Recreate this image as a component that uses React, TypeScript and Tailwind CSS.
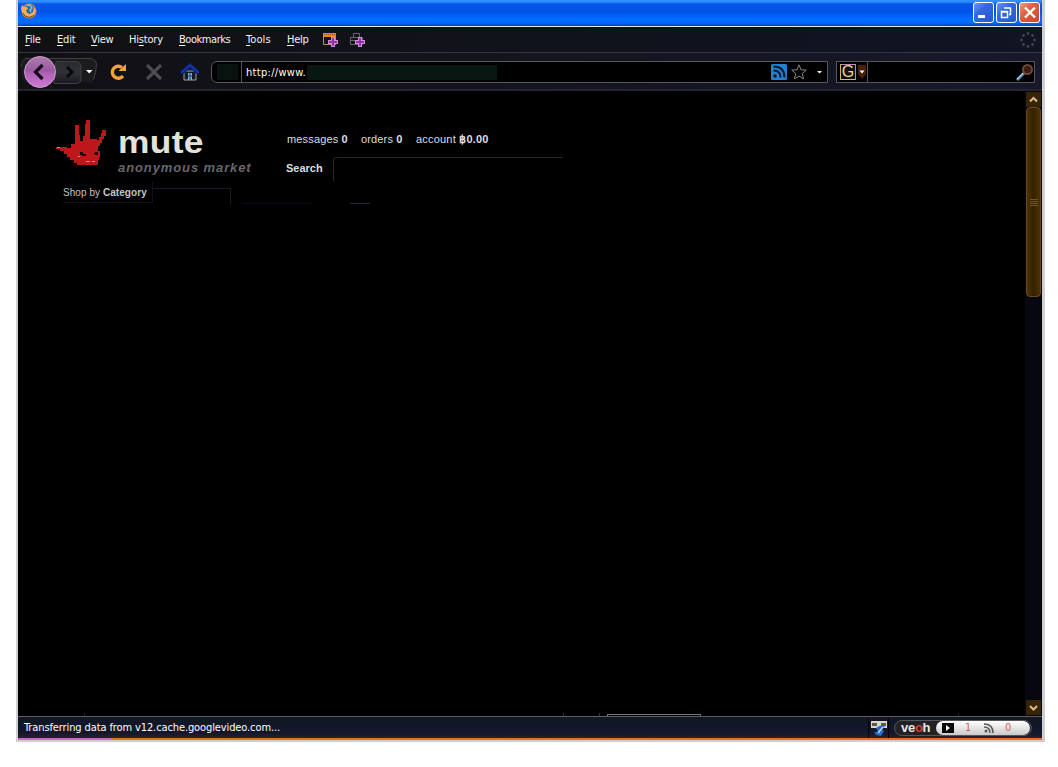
import React from "react";

const ui = "font-['DejaVu_Sans_Condensed','DejaVu_Sans',sans-serif] text-[11px] leading-[14px] whitespace-nowrap";

const menus = [
  { key: "F", pre: "", post: "ile", w: "w-8", ls: "tracking-[-0.2px]" },
  { key: "E", pre: "", post: "dit", w: "w-[34px]", ls: "tracking-[-0.2px]" },
  { key: "V", pre: "", post: "iew", w: "w-[38px]", ls: "tracking-[-0.3px]" },
  { key: "s", pre: "Hi", post: "tory", w: "w-[50px]", ls: "tracking-[-0.2px]" },
  { key: "B", pre: "", post: "ookmarks", w: "w-[67px]", ls: "tracking-[-0.45px]" },
  { key: "T", pre: "", post: "ools", w: "w-[41px]", ls: "tracking-[0.1px]" },
  { key: "H", pre: "", post: "elp", w: "w-[35px]", ls: "tracking-[-0.3px]" },
];

function Firefox() {
  return (
    <svg className="ml-[3px] h-4 w-4" viewBox="0 0 16 16">
      <circle cx="8" cy="8" r="7.5" fill="#d9863a" />
      <circle cx="8.500" cy="6.500" r="5" fill="#2a6c9c" />
      <path d="M6 2.500l3-.5 2 3-2 2 1 2" fill="none" stroke="#86c5d6" strokeWidth="1.5" />
      <path d="M1 2l2 2h3l1 2-2 1 1 3 3 1 3-2 1-5 2 4-3 5-5 1-5-3-2-5z" fill="#f5ae58" />
      <path d="M2 10l2 3 4 1.500 5-2" fill="none" stroke="#85461d" />
    </svg>
  );
}

function CaptionButtons() {
  return (
    <svg className="mr-[1px] h-[22px] w-[68px]" viewBox="0 0 68 22" fill="none">
      <defs>
        <linearGradient id="cb" x1="0" y1="0" x2="1" y2="1">
          <stop offset="0" stopColor="#6d9cf5" />
          <stop offset=".4" stopColor="#3467dc" />
          <stop offset="1" stopColor="#2458d0" />
        </linearGradient>
        <linearGradient id="cr" x1="0" y1="0" x2="1" y2="1">
          <stop offset="0" stopColor="#f0a07f" />
          <stop offset=".4" stopColor="#e06040" />
          <stop offset="1" stopColor="#cc4522" />
        </linearGradient>
      </defs>
      <rect x=".5" y=".5" width="20" height="20" rx="2.5" fill="url(#cb)" stroke="#fff" />
      <rect x="23.5" y=".5" width="20" height="20" rx="2.5" fill="url(#cb)" stroke="#fff" />
      <rect x="46.5" y=".5" width="20" height="20" rx="2.5" fill="url(#cr)" stroke="#fff" />
      <path d="M5 14.5h7" stroke="#fff" strokeWidth="3" />
      <path d="M31 6h7M37.5 6v7M36 12.5h2" stroke="#fff" strokeWidth="1.5" />
      <path d="M28.5 9.5h6v6h-6zM28 10h7" stroke="#fff" strokeWidth="1.5" />
      <path d="M52 5.500l10 10M62 5.500l-10 10" stroke="#fff" strokeWidth="2.400" />
    </svg>
  );
}

function Plus() {
  return (
    <>
      <path d="M9 5h4v3h3v4h-3v3H9v-3H6V8h3z" fill="#cf8ed8" />
      <path d="M10 6h2v3h3v2h-3v3h-2v-3H7V9h3z" fill="#9532a8" />
    </>
  );
}

function Throbber() {
  const dots = [[8, 1.5], [12.5, 3.5], [14.5, 8], [12.5, 12.5], [8, 14.5], [3.5, 12.5], [1.5, 8], [3.5, 3.5]];
  return (
    <svg className="mr-[6px] h-4 w-4" viewBox="0 0 16 16">
      {dots.map(([x, y], i) => <circle key={i} cx={x} cy={y} r="1.4" fill="#41444f" />)}
    </svg>
  );
}

function NavButtons() {
  return (
    <svg className="h-[34px] w-[79px] shrink-0" viewBox="0 0 79 34" fill="none">
      <defs>
        <linearGradient id="back" x1="0" y1="0" x2="0" y2="1">
          <stop offset="0" stopColor="#b07ab2" />
          <stop offset=".45" stopColor="#9a5a9e" />
          <stop offset=".55" stopColor="#b062b6" />
          <stop offset="1" stopColor="#cf78d4" />
        </linearGradient>
        <linearGradient id="fwd" x1="0" y1="0" x2="0" y2="1">
          <stop offset="0" stopColor="#2a2b2e" />
          <stop offset=".5" stopColor="#303134" />
          <stop offset="1" stopColor="#1a1a1e" />
        </linearGradient>
      </defs>
      <path d="M7 3.500h66q6 1 6 8-1 8-4 16H8q-5-3-5-10t4-14z" fill="#1b1b1e" />
      <path d="M3 12q1-8 5-8.500h65q5 1 5.500 6-.5 9-3 15" stroke="#404147" />
      <path d="M38 6.500h21q4 1 4 5v13q0 3-4 4H36z" fill="url(#fwd)" stroke="#3d3e42" />
      <path d="M49 12l5 5-5 5" stroke="#08080c" strokeWidth="3" />
      <circle cx="22" cy="17" r="15.500" fill="url(#back)" stroke="#c99acc" />
      <path d="M24.500 10l-7 7 7 7" stroke="#17091a" strokeWidth="3.200" />
      <path d="M68 15h6.500l-3.250 3.500z" fill="#fff" />
    </svg>
  );
}

function Reload() {
  return (
    <svg className="ml-[12px] h-[18px] w-[18px]" viewBox="0 0 18 18" fill="none">
      <path d="M14 13A6 6 0 1 1 13 4.500" stroke="#f0a336" strokeWidth="3.400" />
      <path d="M9.500 8H17V1z" fill="#f5a52d" />
    </svg>
  );
}

function House() {
  return (
    <svg className="ml-[18px] h-[18px] w-5" viewBox="0 0 20 18" fill="none">
      <path d="M4 8h12v9H4z" fill="#151a26" stroke="#a9a295" />
      <path d="M1.500 10L10 2.500l8.500 7.500" stroke="#0b2385" strokeWidth="4" />
      <path d="M1 10L10 2l9 8" stroke="#1e4bc4" />
      <path d="M8 10h4v7H8z" fill="#76b9d5" />
      <path d="M10 10v7M8 13h4" stroke="#163e66" />
    </svg>
  );
}

function SearchEngine() {
  return (
    <div className="flex h-full w-[31px] items-center border-r border-[#55565e] pl-[3px]">
      <div className="flex h-4 w-4 shrink-0 items-center justify-center border border-t-[#c58bb8] border-r-[#74a5d8] border-b-[#d9b76a] border-l-[#d7b45c] bg-[#100c10] font-['Liberation_Sans',sans-serif] text-[16px] leading-none text-[#f2d987]">G</div>
      <svg className="ml-[2px] h-4 w-2" viewBox="0 0 8 16"><path d="M0 1h8v9l-4 5-4-5z" fill="#4b200d" /><path d="M1.500 6.500h5L4 9.500z" fill="#fff" /></svg>
    </div>
  );
}

function HandLogo() {
  return (
    <svg className="h-[48px] w-[52px]" viewBox="0 0 52 48">
      <path d="M20 6h4v10h1v6h3v-5h2V5h1V1h4v19h7v1h2v-3h2v-4h1v-3h4v6h-2v3h-2v4h-2v3h-2v5h2v6h-1v3h-1v5H22v-2h-3v-3h-4v-3h-3v-3H9v-3H5v-2H1v-2h11v1h4v-4h4z" fill="#bd171b" />
      <path d="M25 33h3v2h3v2h-4v-1h-2zM40 33h3v3h-3v-1h-1v-1h1z" fill="#1f0305" />
      <path d="M23 37h2v1h-2zm8 5h4v1h-4zm6 0h3v1h-3zM2 28h3v1H2z" fill="#d98d8b" />
    </svg>
  );
}

export default function App() {
  return (
    <div className="h-[767px] w-[1058px] overflow-hidden bg-white">
      <div className="ml-4 flex h-[742px] w-[1029px] flex-col border-r-[3px] border-b-2 border-l-2 border-[#cfcfd1] bg-black">
        <header className="flex h-[26px] shrink-0 items-center justify-between bg-[linear-gradient(#398eff_0px,#258bff_2px,#0757e8_4px,#0053e7_12px,#006aff_18px,#0069ff_23px,#0040bd_26px)]">
          <div className="mb-1"><Firefox /></div>
          <CaptionButtons />
        </header>
        <nav className={`flex h-[27px] shrink-0 items-center border-t border-b border-t-[#e7e7e9] border-b-[#34353e] bg-gradient-to-r from-[#111113] to-[#101423] pl-[7px] text-[#f3f3f3] ${ui}`}>
          {menus.map((m) => (
            <span key={m.key} className={`shrink-0 ${m.w} ${m.ls}`}>{m.pre}<span className="underline underline-offset-2">{m.key}</span>{m.post}</span>
          ))}
          <svg className="h-4 w-4" viewBox="0 0 16 16"><path d="M1.500 3v9.500h12V3" fill="#151315" stroke="#b98f5c" /><path d="M1 1h13v4H1z" fill="#f08422" /><path d="M2 2.500h11" stroke="#9c4f10" strokeDasharray="1 1" /><Plus /></svg>
          <svg className="ml-[11px] h-4 w-4" viewBox="0 0 16 16"><path d="M1.500 12.500v-7h3v-4h6v4h3v7zM4 5.500h7M1 8.500h8" fill="none" stroke="#66666c" /><Plus /></svg>
          <div className="ml-auto"><Throbber /></div>
        </nav>
        <div className="flex h-[38px] shrink-0 items-center border-b-2 border-[#24252e] bg-gradient-to-r from-[#101014] to-[#17182a] pt-[2px]">
          <NavButtons />
          <Reload />
          <svg className="ml-[19px] h-4 w-4" viewBox="0 0 16 16"><path d="M1 1l14 14M15 1L1 15" stroke="#4c4d52" strokeWidth="3.200" /></svg>
          <House />
          <div className="ml-[11px] flex h-[22px] w-[617px] shrink-0 items-center rounded-l-[6px] border border-[#55565e] bg-black">
            <div className="flex h-full w-[30px] items-center border-r border-[#55565e] pl-[5px]"><div className="h-4 w-[21px] bg-[#081310]" /></div>
            <span className={`mt-[2px] ml-1 w-[61px] tracking-[0.3px] text-white ${ui}`}>http://www.</span>
            <div className="mt-px h-[15px] w-[190px] bg-[#091713]" />
            <svg className="ml-auto h-4 w-4" viewBox="0 0 16 16" fill="none"><rect width="16" height="16" rx="1.500" fill="#2480d0" /><circle cx="4" cy="12" r="1.800" fill="#071a30" /><path d="M2.500 6.500q7 0 7 7M2.500 2.500q11 0 11 11" stroke="#071a30" strokeWidth="2" /></svg>
            <svg className="ml-1 h-4 w-4" viewBox="0 0 16 16"><path d="M8 .8l2 4.900 5.300.4-4 3.400 1.200 5.400L8 12l-4.500 2.900L4.700 9.500.7 6.100 6 5.700z" fill="#050505" stroke="#84858b" /></svg>
            <svg className="mr-[5px] ml-[10px] h-4 w-[5px]" viewBox="0 0 5 16"><path d="M0 7h5L2.500 9.500z" fill="#fff" /></svg>
          </div>
          <div className="ml-2 flex h-[22px] w-[199px] shrink-0 items-center border border-[#55565e] bg-black">
            <SearchEngine />
            <svg className="mr-[1px] ml-auto h-[17px] w-[17px]" viewBox="0 0 17 17" fill="none"><path d="M1 16l7-7" stroke="#5d94bd" strokeWidth="3" /><path d="M1 15l6-6" stroke="#c6dae2" /><circle cx="11.500" cy="5.500" r="4.500" fill="#3a1d10" stroke="#6e4736" strokeWidth="2" /></svg>
          </div>
        </div>
        <div className="flex min-h-0 grow">
          <main className="flex min-w-0 grow flex-col font-['Liberation_Sans',sans-serif]">
            <div className="flex h-[91px] pt-[28px] pl-[37px]">
              <HandLogo />
              <div className="ml-[11px] w-[168px] whitespace-nowrap">
                <div className="mt-[8px] h-8 origin-left scale-x-[1.14] text-[31px] leading-8 font-bold tracking-[0.3px] text-[#e3e3dc]">mute</div>
                <div className="pt-px text-[13px] leading-[15px] font-bold tracking-[0.9px] text-[#66666c] italic">anonymous market</div>
              </div>
              <div className="w-[280px] text-[11px] leading-[13px] text-[#dcdce5]">
                <div className="mt-[14px] ml-px flex tracking-[0.150px] whitespace-nowrap">
                  <span className="w-[74px]">messages <b>0</b></span>
                  <span className="w-[55px]">orders <b>0</b></span>
                  <span className="tracking-[0.200px]">account <b>฿0.00</b></span>
                </div>
                <div className="mt-[11px] flex h-6">
                  <b className="mt-[5px] w-[47px]">Search</b>
                  <div className="w-[230px] rounded-tl border-t border-l border-[#24242d]" />
                </div>
              </div>
            </div>
            <div className="flex h-[22px] pl-[45px] text-[10px] leading-[20px] text-[#c3c3c8]">
              <div className="h-[21px] w-[90px] border-r border-b border-[#11111c] pt-px tracking-[0.060px] whitespace-nowrap">Shop by <b>Category</b></div>
              <div className="mt-[6px] h-4 w-[78px] border-t border-r border-[#191925]" />
              <div className="mt-[21px] ml-3 h-px w-[70px] bg-[#0b0b20]" />
              <div className="mt-[21px] ml-[37px] h-px w-5 bg-[#282840]" />
            </div>
            <div className="mt-auto flex h-[3px] pl-[66px]">
              <i className="h-[3px] w-px bg-[#25252a]" /><i className="ml-[478px] h-[3px] w-px bg-[#333]" /><i className="ml-[35px] h-[3px] w-px bg-[#333]" />
              <i className="ml-[7px] h-[2px] w-[94px] self-end border border-b-0 border-[#77777b]" />
              <i className="ml-[257px] h-[3px] w-px bg-[#222]" />
            </div>
          </main>
          <aside className="flex w-[17px] shrink-0 flex-col items-center bg-[#060710]">
            <svg className="mt-px h-[15px] w-[15px] shrink-0" viewBox="0 0 15 15"><rect width="15" height="15" fill="#352406" /><path d="M4 9.500L7.500 6 11 9.500" fill="none" stroke="#e2b884" strokeWidth="2" /></svg>
            <div className="flex h-[190px] w-[15px] shrink-0 flex-col items-center justify-center gap-px rounded-sm border border-[#6b4725] bg-gradient-to-r from-[#4c3300] via-[#352300] to-[#4b3300]">
              <i className="h-px w-2 bg-[#755424]" /><i className="h-px w-2 bg-[#755424]" /><i className="h-px w-2 bg-[#755424]" /><i className="h-px w-2 bg-[#755424]" />
            </div>
            <svg className="mt-auto mb-px h-[15px] w-[15px] shrink-0" viewBox="0 0 15 15"><rect width="15" height="15" fill="#352406" /><path d="M4 6l3.500 3.500L11 6" fill="none" stroke="#e2b884" strokeWidth="2" /></svg>
          </aside>
        </div>
        <footer className={`flex h-[22px] shrink-0 items-center border-t border-[#5c5c62] bg-[linear-gradient(#17171e,#101727_25%,#15172c_75%,#29202a)] pl-[6px] text-white ${ui}`}>
          <span className="tracking-[-0.110px]">Transferring data from v12.cache.googlevideo.com...</span>
          <div className="ml-auto flex h-5 w-[21px] items-center justify-center border-x border-[#050508]">
            <svg className="h-4 w-4" viewBox="0 0 16 16"><path d="M0 1h16v7H0z" fill="#d9d9d4" /><path d="M1 3h5v3H1zm9 0h5v3h-5z" fill="#665544" /><path d="M5 8q5-4 9-2l-3 3 2 2-3 5-5-1-2-3h4z" fill="#236bc9" /><path d="M7 13l5-6" stroke="#b8dcff" strokeWidth="1.500" /></svg>
          </div>
          <div className="mr-[10px] ml-[5px] flex h-4 w-[138px] items-center rounded-full border border-[#55555a] bg-[#222226] pl-[6px]">
            <span className="w-[35px] font-['Liberation_Sans',sans-serif] text-[13px] leading-3 font-bold tracking-[-0.3px] text-[#e8e8e8]">ve<span className="text-[#dc3d22]">o</span>h</span>
            <div className="flex h-[14px] w-[94px] shrink-0 items-center rounded-full bg-gradient-to-b from-white to-[#cbcbcb] pl-[6px] text-[#d36455]">
              <svg className="h-[10px] w-3" viewBox="0 0 12 10"><path d="M0 0h12v10H0z" fill="#080808" /><path d="M4 2l4 3-4 3z" fill="#fff" /></svg>
              <span className="ml-[11px] w-[19px]">1</span>
              <svg className="h-[10px] w-[10px]" viewBox="0 0 10 10" fill="none"><circle cx="2" cy="8" r="1.500" fill="#555" /><path d="M0 4q6 0 6 6M0 1q9 0 9 9" stroke="#555" strokeWidth="1.500" /></svg>
              <span className="ml-[11px]">0</span>
            </div>
          </div>
        </footer>
        <div className="flex h-[2px] shrink-0 bg-gradient-to-r from-[#ca8018] to-[#f16a28]"><div className="w-[93px] bg-[#c66bc5]" /></div>
      </div>
    </div>
  );
}
